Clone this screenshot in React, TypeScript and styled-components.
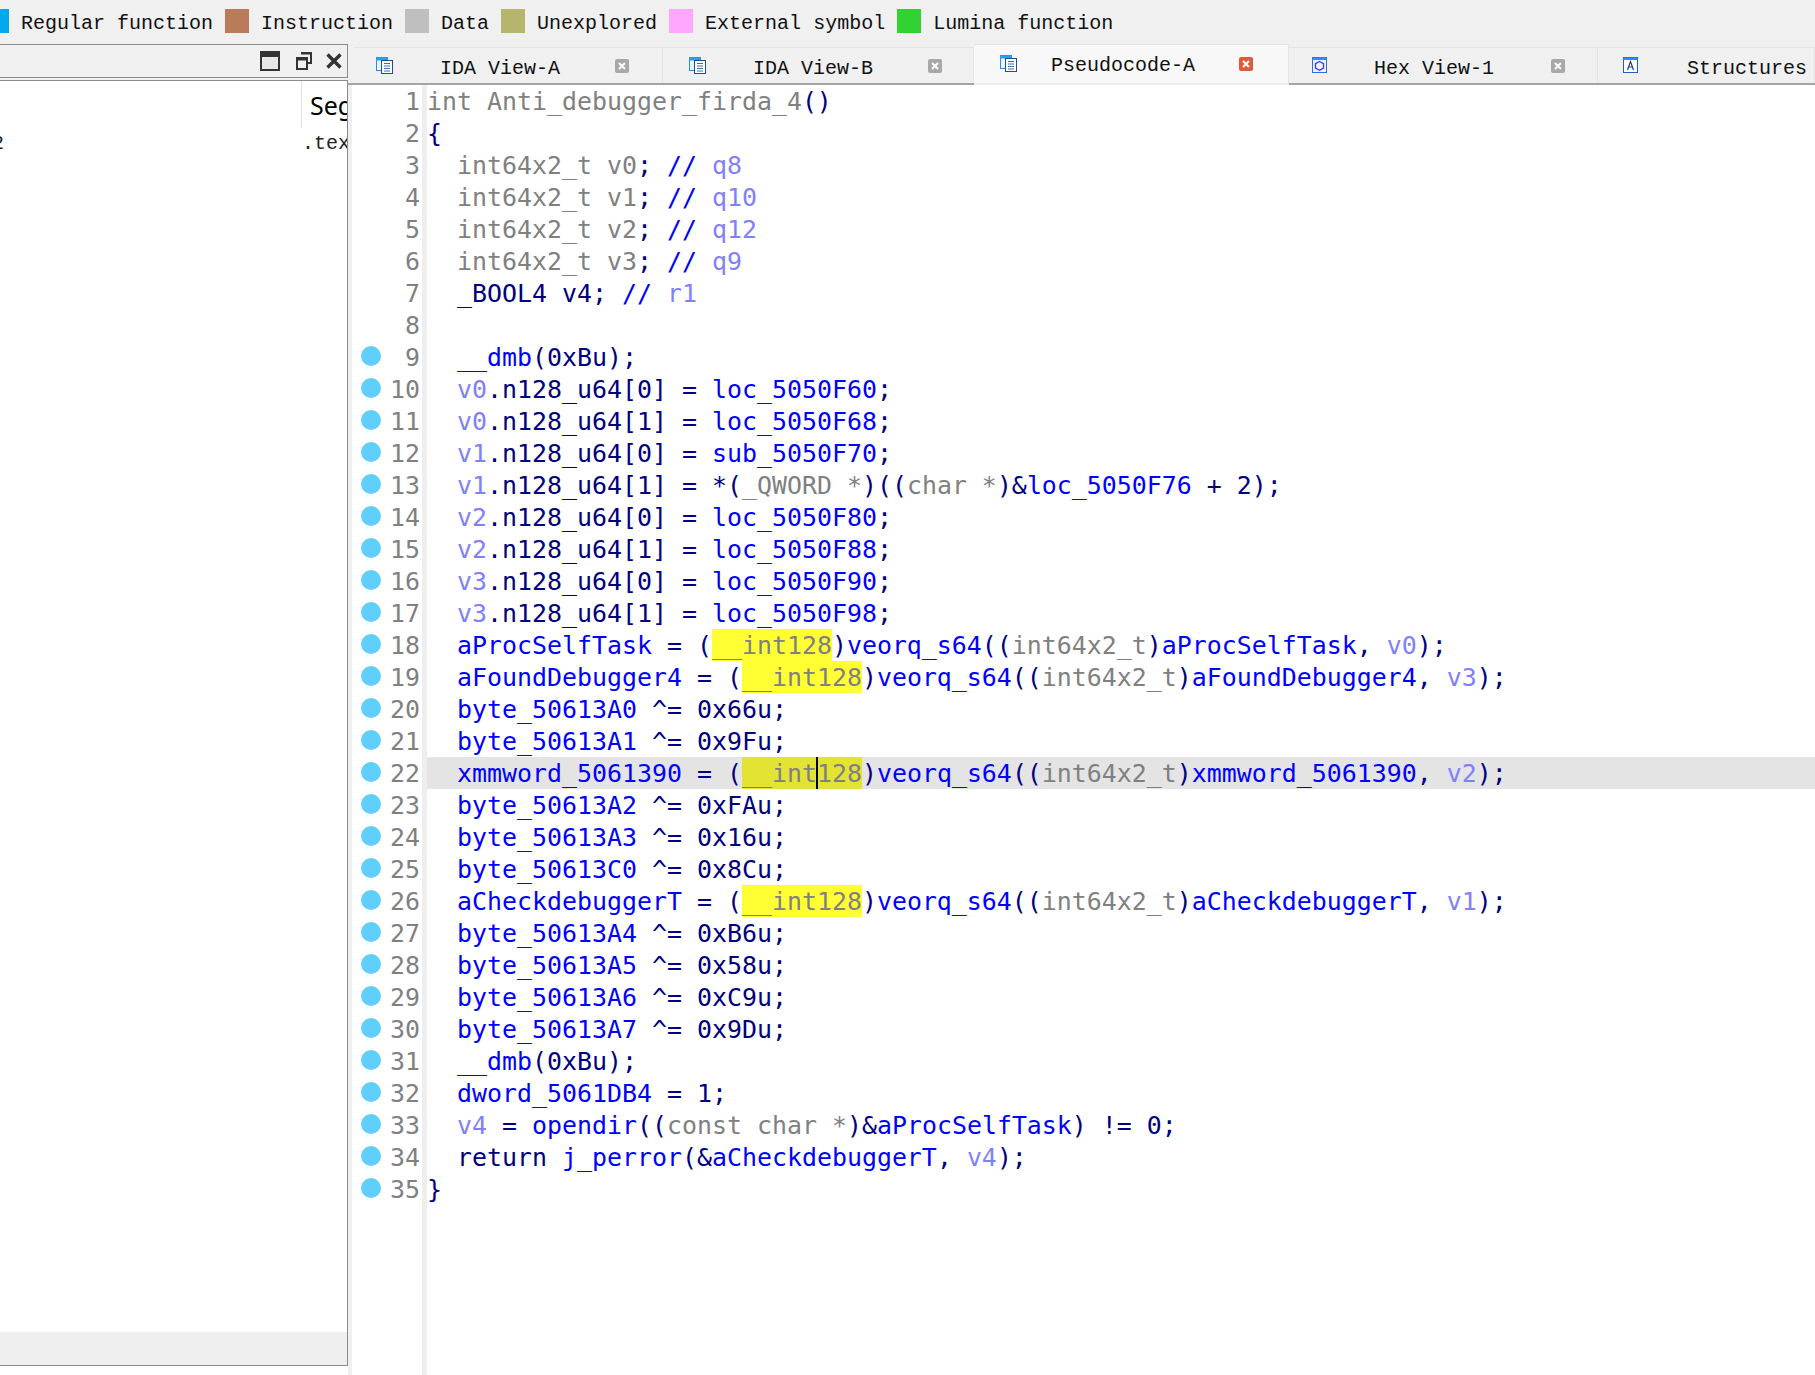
import React from "react";
import styled, { createGlobalStyle } from "styled-components";

const Global = createGlobalStyle`
  html, body { margin: 0; padding: 0; background: #fff; overflow: hidden; }
`;

const Page = styled.div`
  width: 1815px;
  height: 1375px;
  display: flex;
  flex-direction: column;
  overflow: hidden;
  background: #fff;
`;

const Legend = styled.div`
  height: 44px;
  flex: none;
  display: flex;
  align-items: flex-start;
  gap: 12px;
  padding-top: 9px;
  box-sizing: border-box;
  margin-left: -15px;
  background: #f0f0f0;
  font: 20px/29px "Liberation Mono", monospace;
  color: #111;
`;

const Swatch = styled.span<{ $c: string }>`
  width: 24px;
  height: 24px;
  flex: none;
  background: ${(p) => p.$c};
`;

const Body = styled.div`
  flex: 1;
  display: flex;
  min-height: 0;
`;

const LeftCol = styled.div`
  width: 348px;
  flex: none;
  display: flex;
  flex-direction: column;
  background: #f0f0f0;
`;

const TitleBar = styled.div`
  height: 34px;
  flex: none;
  box-sizing: border-box;
  border: solid #8a8a90;
  border-width: 1px 1px 1px 0;
  display: flex;
  align-items: center;
  justify-content: flex-end;
  padding-right: 5px;
  background: #f0f0f0;
`;

const TitleBtn = styled.svg<{ $ml: number }>`
  display: block;
  flex: none;
  margin-left: ${(p) => p.$ml}px;
`;

const Panel = styled.div`
  margin-top: 2px;
  height: 1286px;
  flex: none;
  box-sizing: border-box;
  border: solid #8a8a90;
  border-width: 1px 1px 1px 0;
  background: #fff;
  display: flex;
  flex-direction: column;
  overflow: hidden;
`;

const PanelHead = styled.div`
  height: 47px;
  flex: none;
  display: flex;
  justify-content: flex-end;
`;

const HeadCell = styled.div`
  width: 46px;
  box-sizing: border-box;
  border-left: 1px solid #e2e2e2;
  padding: 2px 0 0 8px;
  font: 25px/44px "Noto Sans", sans-serif;
  color: #000;
  overflow: hidden;
  white-space: nowrap;
`;

const PanelRow = styled.div`
  display: grid;
  grid-template-columns: 301px 46px;
  height: 32px;
  font: 20px/32px "Liberation Mono", monospace;
  color: #222;
`;

const LeftCell = styled.div`
  margin-left: -8px;
`;

const RightCell = styled.div`
  padding-left: 1px;
  overflow: hidden;
`;

const PanelSpacer = styled.div`
  flex: 1;
`;

const PanelFoot = styled.div`
  height: 33px;
  flex: none;
  background: #efefef;
`;

const LeftBottom = styled.div`
  flex: 1;
  background: #fff;
`;

const RightCol = styled.div`
  flex: 1;
  min-width: 0;
  display: flex;
  flex-direction: column;
`;

const TabBar = styled.div`
  height: 41px;
  flex: none;
  box-sizing: border-box;
  display: flex;
  align-items: flex-end;
  padding-left: 6px;
  background: #f0f0f0;
  border-bottom: 2px solid #a4a4a4;
  position: relative;
`;

const Tab = styled.div<{ $w: number; $pad: number; $active?: boolean }>`
  width: ${(p) => p.$w}px;
  flex: none;
  box-sizing: border-box;
  height: ${(p) => (p.$active ? 41 : 36)}px;
  margin-bottom: ${(p) => (p.$active ? -2 : 0)}px;
  padding-left: ${(p) => p.$pad}px;
  padding-top: ${(p) => (p.$active ? 10 : 9)}px;
  display: flex;
  align-items: flex-start;
  background: ${(p) => (p.$active ? "#f8f8f8" : "#f0f0f0")};
  border-top: 1px solid #e4e4e4;
  border-right: 1px solid #e4e4e4;
  ${(p) => (p.$active ? "border-bottom: 2px solid #ececec; position: relative;" : "")}
`;

const TabGlyph = styled.svg`
  display: block;
  flex: none;
`;

const TabLabel = styled.span<{ $gap: number; $active?: boolean }>`
  margin-left: ${(p) => p.$gap}px;
  margin-top: ${(p) => (p.$active ? 1 : 2)}px;
  font: 20px/20px "Liberation Mono", monospace;
  color: #111;
  white-space: pre;
`;

const TabClose = styled.span<{ $gap: number; $active?: boolean }>`
  margin-left: ${(p) => p.$gap}px;
  margin-top: 2px;
  width: 14px;
  height: 14px;
  flex: none;
  border-radius: 2px;
  background: ${(p) => (p.$active ? "#e05a3c" : "#a8a8a8")};
  display: flex;
  align-items: center;
  justify-content: center;
`;

const Editor = styled.div`
  flex: 1;
  min-height: 0;
  display: flex;
  border-left: 4px solid #f0f0f0;
  font-family: "DejaVu Sans Mono", monospace;
  font-size: 24.92px;
  line-height: 34px;
`;

const Gutter = styled.div`
  width: 75px;
  flex: none;
  box-sizing: border-box;
  border-right: 5px solid #eeeeee;
  display: flex;
  flex-direction: column;
`;

const GutterRow = styled.div`
  height: 32px;
  flex: none;
  display: flex;
  align-items: center;
  padding: 0 2px 0 9px;
`;

const Dot = styled.span`
  width: 20px;
  height: 20px;
  border-radius: 50%;
  background: #5fcfff;
  flex: none;
  margin-top: -2px;
`;

const LineNo = styled.span`
  margin-left: auto;
  padding-top: 2px;
  color: #808080;
`;

const Code = styled.div`
  flex: 1;
  min-width: 0;
  display: flex;
  flex-direction: column;
`;

const CodeLine = styled.div<{ $current?: boolean }>`
  height: 32px;
  flex: none;
  white-space: pre;
  color: #000080;
  background: ${(p) => (p.$current ? "#e4e4e4" : "transparent")};
`;

const COLORS: Record<string, string> = {
  g: "#808080",
  b: "#0000ff",
  l: "#8080ff",
};

const Tok = styled.span<{ $k: string }>`
  color: ${(p) => COLORS[p.$k]};
`;

const Hi = styled.span<{ $current?: boolean }>`
  display: inline-block;
  height: 32px;
  vertical-align: top;
  color: #808080;
  background: ${(p) => (p.$current ? "#e3e333" : "#ffff33")};
`;

const Caret = styled.span`
  display: inline-block;
  width: 2px;
  height: 32px;
  margin: 0 -1px;
  vertical-align: top;
  background: #000;
  position: relative;
`;

const SOURCE: string[] = [
  "‹g|int Anti_debugger_firda_4›()",
  "{",
  "  ‹g|int64x2_t v0›; ‹b|//› ‹l|q8›",
  "  ‹g|int64x2_t v1›; ‹b|//› ‹l|q10›",
  "  ‹g|int64x2_t v2›; ‹b|//› ‹l|q12›",
  "  ‹g|int64x2_t v3›; ‹b|//› ‹l|q9›",
  "  _BOOL4 v4; ‹b|//› ‹l|r1›",
  "",
  "  ‹b|__dmb›(0xBu);",
  "  ‹l|v0›.n128_u64[0] = ‹b|loc_5050F60›;",
  "  ‹l|v0›.n128_u64[1] = ‹b|loc_5050F68›;",
  "  ‹l|v1›.n128_u64[0] = ‹b|sub_5050F70›;",
  "  ‹l|v1›.n128_u64[1] = *(‹g|_QWORD *›)((‹g|char *›)&‹b|loc_5050F76› + 2);",
  "  ‹l|v2›.n128_u64[0] = ‹b|loc_5050F80›;",
  "  ‹l|v2›.n128_u64[1] = ‹b|loc_5050F88›;",
  "  ‹l|v3›.n128_u64[0] = ‹b|loc_5050F90›;",
  "  ‹l|v3›.n128_u64[1] = ‹b|loc_5050F98›;",
  "  ‹b|aProcSelfTask› = (‹h|__int128›)‹b|veorq_s64›((‹g|int64x2_t›)‹b|aProcSelfTask›, ‹l|v0›);",
  "  ‹b|aFoundDebugger4› = (‹h|__int128›)‹b|veorq_s64›((‹g|int64x2_t›)‹b|aFoundDebugger4›, ‹l|v3›);",
  "  ‹b|byte_50613A0› ^= 0x66u;",
  "  ‹b|byte_50613A1› ^= 0x9Fu;",
  "  ‹b|xmmword_5061390› = (‹c|__int›‹x|›‹c|128›)‹b|veorq_s64›((‹g|int64x2_t›)‹b|xmmword_5061390›, ‹l|v2›);",
  "  ‹b|byte_50613A2› ^= 0xFAu;",
  "  ‹b|byte_50613A3› ^= 0x16u;",
  "  ‹b|byte_50613C0› ^= 0x8Cu;",
  "  ‹b|aCheckdebuggerT› = (‹h|__int128›)‹b|veorq_s64›((‹g|int64x2_t›)‹b|aCheckdebuggerT›, ‹l|v1›);",
  "  ‹b|byte_50613A4› ^= 0xB6u;",
  "  ‹b|byte_50613A5› ^= 0x58u;",
  "  ‹b|byte_50613A6› ^= 0xC9u;",
  "  ‹b|byte_50613A7› ^= 0x9Du;",
  "  ‹b|__dmb›(0xBu);",
  "  ‹b|dword_5061DB4› = 1;",
  "  ‹l|v4› = ‹b|opendir›((‹g|const char *›)&‹b|aProcSelfTask›) != 0;",
  "  return ‹b|j_perror›(&‹b|aCheckdebuggerT›, ‹l|v4›);",
  "}",
];

function renderLine(src: string): React.ReactNode[] {
  const out: React.ReactNode[] = [];
  const re = /‹(\w)\|([^›]*)›/g;
  let last = 0;
  let m: RegExpExecArray | null;
  let i = 0;
  while ((m = re.exec(src))) {
    if (m.index > last) out.push(src.slice(last, m.index));
    const [, k, text] = m;
    if (k === "h") out.push(<Hi key={i++}>{text}</Hi>);
    else if (k === "c") out.push(<Hi key={i++} $current>{text}</Hi>);
    else if (k === "x") out.push(<Caret key={i++} />);
    else out.push(<Tok key={i++} $k={k}>{text}</Tok>);
    last = m.index + m[0].length;
  }
  if (last < src.length) out.push(src.slice(last));
  return out;
}

const LEGEND: [string, string][] = [
  ["#00a8ee", "Regular function"],
  ["#b97b5a", "Instruction"],
  ["#bfbfbf", "Data"],
  ["#b5b56c", "Unexplored"],
  ["#ffa6ff", "External symbol"],
  ["#33d233", "Lumina function"],
];

const DocIcon = () => (
  <TabGlyph width="17" height="17" viewBox="0 0 17 17">
    <rect x="0.5" y="0.5" width="11" height="13" fill="#eaf5ff" stroke="#2f8be0" />
    <rect x="0.5" y="0.5" width="11" height="3" fill="#2f9cf0" />
    <rect x="5.5" y="3.5" width="11" height="13" fill="#fff" stroke="#1d4f8c" />
    <path d="M8 6.5h6M8 9h6M8 11.5h6M8 14h6" stroke="#3f6f9f" strokeWidth="1" />
  </TabGlyph>
);

const HexIcon = () => (
  <TabGlyph width="16" height="16" viewBox="0 0 16 16">
    <rect x="0.5" y="0.5" width="14" height="15" fill="#eef2ff" stroke="#2f6be8" />
    <rect x="0.5" y="0.5" width="14" height="2.5" fill="#2f8ff0" />
    <path d="M7.5 4.500l4 2.200v4.400l-4 2.200-4-2.200V6.700z" fill="none" stroke="#3a3af0" strokeWidth="1.300" />
  </TabGlyph>
);

const StructIcon = () => (
  <TabGlyph width="16" height="16" viewBox="0 0 16 16">
    <rect x="0.5" y="0.5" width="14" height="15" fill="#fff" stroke="#1f5fc0" />
    <rect x="0.5" y="0.5" width="14" height="2.5" fill="#2f8ff0" />
    <path d="M4.500 13L7.500 4.500l3 8.500M5.500 10h4" fill="none" stroke="#1d3f80" strokeWidth="1.200" />
  </TabGlyph>
);

const SmallX = () => (
  <svg width="8" height="8" viewBox="0 0 8 8">
    <path d="M1 1l6 6M7 1l-6 6" stroke="#fff" strokeWidth="2" />
  </svg>
);

type TabDef = {
  label: string;
  w: number;
  pad: number;
  gap: number;
  closeGap?: number;
  icon: React.ReactNode;
  active?: boolean;
};

const TABS: TabDef[] = [
  { label: "IDA View-A", w: 309, pad: 22, gap: 47, closeGap: 55, icon: <DocIcon /> },
  { label: "IDA View-B", w: 311, pad: 26, gap: 47, closeGap: 55, icon: <DocIcon /> },
  { label: "Pseudocode-A", w: 315, pad: 26, gap: 34, closeGap: 44, icon: <DocIcon />, active: true },
  { label: "Hex View-1", w: 309, pad: 23, gap: 46, closeGap: 57, icon: <HexIcon /> },
  { label: "Structures", w: 217, pad: 25, gap: 48, icon: <StructIcon /> },
];

export default function App() {
  return (
    <Page>
      <Global />
      <Legend>
        {LEGEND.map(([c, t]) => (
          <React.Fragment key={t}>
            <Swatch $c={c} />
            <span>{t}</span>
          </React.Fragment>
        ))}
      </Legend>
      <Body>
        <LeftCol>
          <TitleBar>
            <TitleBtn $ml={0} width="20" height="20" viewBox="0 0 20 20">
              <rect x="1" y="1" width="18" height="18" fill="#e4e8e4" stroke="#333" strokeWidth="2" />
              <rect x="0" y="0" width="20" height="6" fill="#333" />
            </TitleBtn>
            <TitleBtn $ml={16} width="16" height="18" viewBox="0 0 16 18">
              <path d="M5 1h10v10h-4" fill="none" stroke="#333" strokeWidth="2" />
              <path d="M5 1h10" stroke="#333" strokeWidth="3" />
              <rect x="1" y="6" width="10" height="11" fill="none" stroke="#333" strokeWidth="2" />
              <path d="M1 7h10" stroke="#333" strokeWidth="3" />
            </TitleBtn>
            <TitleBtn $ml={14} width="16" height="16" viewBox="0 0 16 16">
              <path d="M1.500 1.500l13 13M14.500 1.500l-13 13" stroke="#333" strokeWidth="3.400" />
            </TitleBtn>
          </TitleBar>
          <Panel>
            <PanelHead>
              <HeadCell>Segment</HeadCell>
            </PanelHead>
            <PanelRow>
              <LeftCell>2</LeftCell>
              <RightCell>.text</RightCell>
            </PanelRow>
            <PanelSpacer />
            <PanelFoot />
          </Panel>
          <LeftBottom />
        </LeftCol>
        <RightCol>
          <TabBar>
            {TABS.map((t) => (
              <Tab key={t.label} $w={t.w} $pad={t.pad} $active={t.active}>
                {t.icon}
                <TabLabel $gap={t.gap} $active={t.active}>{t.label}</TabLabel>
                {t.closeGap !== undefined && (
                  <TabClose $gap={t.closeGap} $active={t.active}>
                    <SmallX />
                  </TabClose>
                )}
              </Tab>
            ))}
          </TabBar>
          <Editor>
            <Gutter>
              {SOURCE.map((_, i) => (
                <GutterRow key={i}>
                  {i >= 8 && <Dot />}
                  <LineNo>{i + 1}</LineNo>
                </GutterRow>
              ))}
            </Gutter>
            <Code>
              {SOURCE.map((s, i) => (
                <CodeLine key={i} $current={i === 21}>
                  {renderLine(s)}
                </CodeLine>
              ))}
            </Code>
          </Editor>
        </RightCol>
      </Body>
    </Page>
  );
}
